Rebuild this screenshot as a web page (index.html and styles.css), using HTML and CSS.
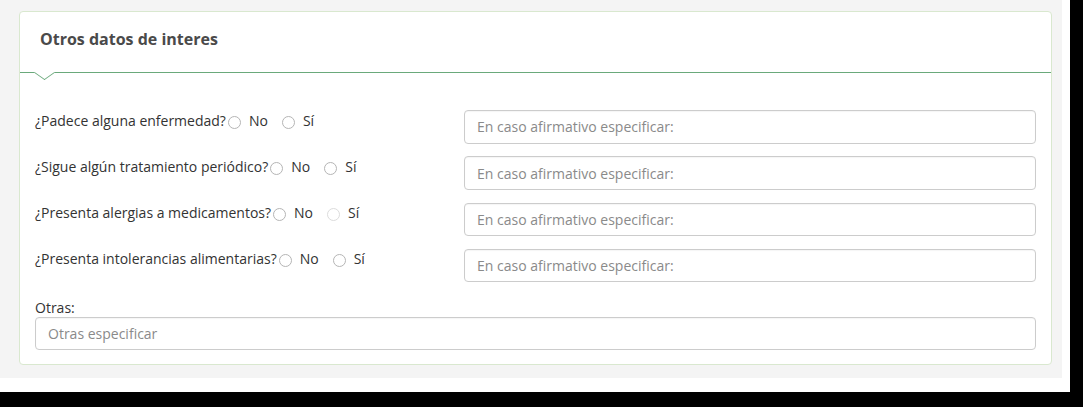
FILE: index.html
```html
<!DOCTYPE html>
<html lang="es">
<head>
    <meta charset="UTF-8">
    <title>Otros datos de interes</title>
    <link rel="stylesheet" href="styles.css">
</head>
<body>
    <div class="frame">
        <div class="canvas">
            <div class="panel">
                <div class="panel-heading">
                    <h3>Otros datos de interes</h3>
                </div>
                <div class="panel-body">
                    <div class="form-row">
                        <div class="question">
                            <span>¿Padece alguna enfermedad?</span>
                            <label class="option"><span class="radio"></span>No</label>
                            <label class="option"><span class="radio"></span>Sí</label>
                        </div>
                        <input type="text" class="form-control" placeholder="En caso afirmativo especificar:">
                    </div>
                    <div class="form-row">
                        <div class="question">
                            <span>¿Sigue algún tratamiento periódico?</span>
                            <label class="option"><span class="radio"></span>No</label>
                            <label class="option"><span class="radio"></span>Sí</label>
                        </div>
                        <input type="text" class="form-control" placeholder="En caso afirmativo especificar:">
                    </div>
                    <div class="form-row">
                        <div class="question">
                            <span>¿Presenta alergias a medicamentos?</span>
                            <label class="option"><span class="radio"></span>No</label>
                            <label class="option"><span class="radio light"></span>Sí</label>
                        </div>
                        <input type="text" class="form-control" placeholder="En caso afirmativo especificar:">
                    </div>
                    <div class="form-row">
                        <div class="question">
                            <span>¿Presenta intolerancias alimentarias?</span>
                            <label class="option"><span class="radio"></span>No</label>
                            <label class="option"><span class="radio"></span>Sí</label>
                        </div>
                        <input type="text" class="form-control" placeholder="En caso afirmativo especificar:">
                    </div>
                    <div class="form-group">
                        <label class="field-label">Otras:</label>
                        <input type="text" class="form-control" placeholder="Otras especificar">
                    </div>
                </div>
            </div>
        </div>
    </div>
</body>
</html>
```

FILE: styles.css
```css
* {
    box-sizing: border-box;
}

html {
    background: #000;
}

body {
    margin: 0;
    font-family: "Open Sans", Arial, sans-serif;
    font-size: 14px;
    color: #333;
}

.frame {
    width: 1070px;
    height: 392px;
    background: #fff;
}

.canvas {
    width: 1062px;
    height: 378px;
    background: #f4f4f4;
    padding: 11px 0 0 19px;
}

.panel {
    width: 1033px;
    height: 354px;
    background: #fff;
    border: 1px solid #d9e8cf;
    border-radius: 4px;
}

.panel-heading {
    position: relative;
    height: 61px;
    padding: 16px 20px 0;
    border-bottom: 1.5px solid #6aa97b;
}

/* little arrow under the heading line */
.panel-heading::after {
    content: "";
    position: absolute;
    left: 17px;
    bottom: -7.75px;
    width: 14px;
    height: 14px;
    background: #fff;
    border-right: 1.5px solid #6aa97b;
    border-bottom: 1.5px solid #6aa97b;
    transform: scaleY(0.7) rotate(45deg);
}

.panel-heading h3 {
    margin: 0;
    font-size: 16px;
    font-weight: 700;
    color: #4a4a4a;
}

.panel-body {
    padding: 37px 15px 15px;
}

.form-row {
    display: grid;
    grid-template-columns: 399px 1fr;
    gap: 30px;
    margin-bottom: 12.8px;
}

.question {
    display: flex;
    align-items: center;
    height: 20px;
    white-space: nowrap;
}

.option {
    display: inline-flex;
    align-items: center;
    margin-left: 2px;
    margin-right: 12px;
}

.radio {
    display: inline-block;
    width: 13px;
    height: 13px;
    margin-right: 8px;
    border: 1px solid #b5b5b5;
    border-radius: 50%;
    background: #fff;
    transform: translateY(2px);
}

.radio.light {
    border-color: #dcdcdc;
}

.form-control {
    display: block;
    width: 100%;
    height: 33.5px;
    padding: 6px 12px;
    font-family: inherit;
    font-size: 14px;
    color: #555;
    border: 1px solid #ccc;
    border-radius: 4px;
    box-shadow: inset 0 1px 1px rgba(0, 0, 0, 0.04);
}

.form-control::placeholder {
    color: #8a8a8a;
}

.field-label {
    display: block;
    padding-top: 3.5px;
    line-height: 18px;
}
```
